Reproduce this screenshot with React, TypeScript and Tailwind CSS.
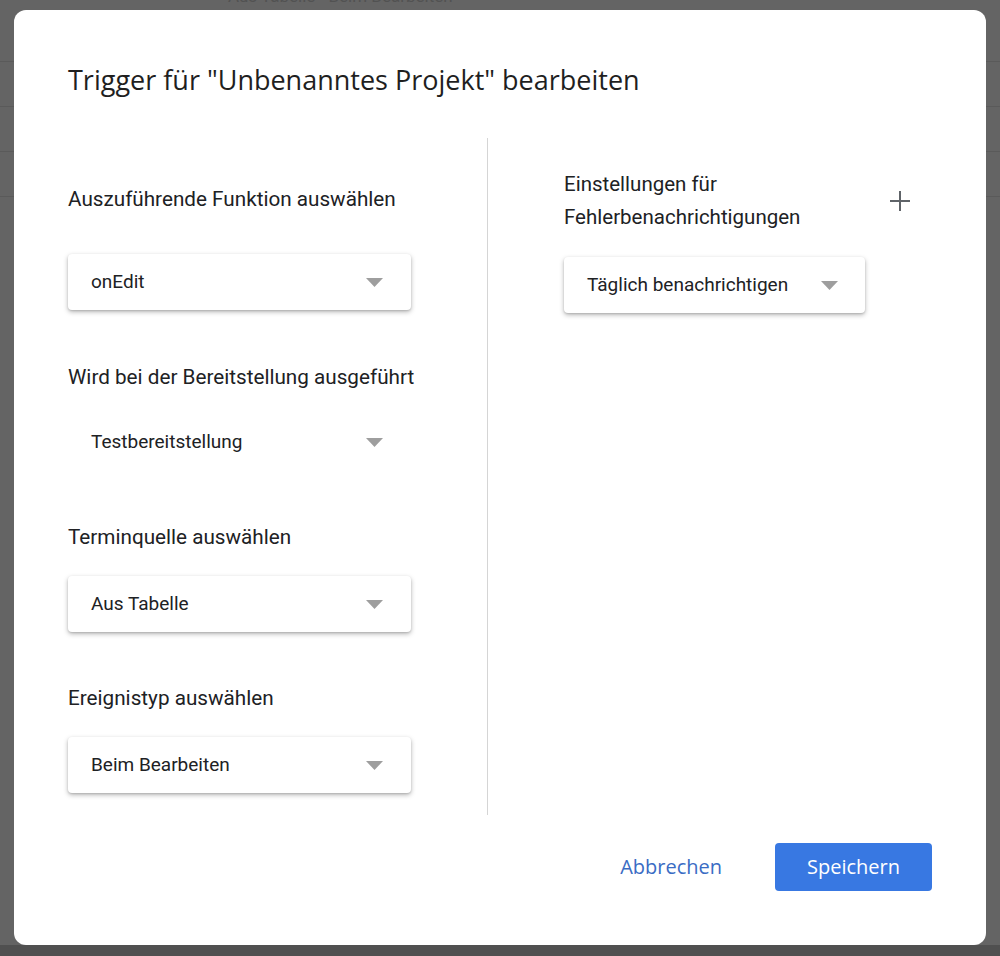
import React from "react";

const Arrow = () => (
  <svg width="17" height="9" viewBox="0 0 17 9" className="shrink-0">
    <path d="M0 0 L17 0 L8.5 9 Z" fill="#9e9e9e" />
  </svg>
);

const SelectBox = ({ text, width = "w-[343px]", plain = false, arrowRight = "pr-[28px]" }: { text: string; width?: string; plain?: boolean; arrowRight?: string }) => (
  <div
    className={`${width} h-[56px] rounded-[4px] bg-white flex items-center justify-between pl-[23px] ${arrowRight} ${plain ? "" : "shadow-[0_2px_5px_rgba(0,0,0,0.28),0_1px_2px_rgba(0,0,0,0.12)]"}`}
  >
    <span className="text-[19px] leading-[28px] text-[#202124]">{text}</span>
    <Arrow />
  </div>
);

const Label = ({ children, className = "" }: { children: React.ReactNode; className?: string }) => (
  <div className={`text-[20.7px] leading-[28px] text-[#202124] ${className}`}>{children}</div>
);

export default function App() {
  return (
    <div className="relative w-[1000px] h-[956px] overflow-hidden bg-[#646464]" style={{ fontFamily: "Roboto, 'Liberation Sans', sans-serif" }}>
      {/* background page */}
      <div className="flex flex-col">
        <div className="h-[62px] border-b border-[#5a5a5a] relative">
          <div className="absolute left-[228px] top-[-14px] text-[17px] leading-[20px] text-[#525252]">Aus Tabelle - Beim Bearbeiten</div>
        </div>
        <div className="h-[45px] border-b border-[#5a5a5a]" />
        <div className="h-[45px] border-b border-[#5a5a5a]" />
        <div className="h-[45px] border-b border-[#5a5a5a]" />
      </div>
      <div className="absolute left-0 right-0 bottom-0 h-[11px] bg-[#505050]" />

      {/* dialog */}
      <div className="absolute left-[14px] top-[10px] w-[972px] h-[935px] rounded-[12px] bg-white px-[54px] flex flex-col">
        <h1
          className="pt-[54px] text-[27px] leading-[32px] text-[#1f1f1f] font-medium"
          style={{ fontFamily: "'Open Sans', sans-serif" }}
        >
          Trigger für "Unbenanntes Projekt" bearbeiten
        </h1>

        <div className="flex mt-[42px]">
          <div className="w-[419px] flex flex-col">
            <Label className="mt-[47px]">Auszuführende Funktion auswählen</Label>
            <div className="mt-[41px]">
              <SelectBox text="onEdit" />
            </div>
            <Label className="mt-[53px]">Wird bei der Bereitstellung ausgeführt</Label>
            <div className="mt-[23px]">
              <SelectBox text="Testbereitstellung" plain />
            </div>
            <Label className="mt-[53px]">Terminquelle auswählen</Label>
            <div className="mt-[25px]">
              <SelectBox text="Aus Tabelle" />
            </div>
            <Label className="mt-[52px]">Ereignistyp auswählen</Label>
            <div className="mt-[25px]">
              <SelectBox text="Beim Bearbeiten" />
            </div>
          </div>

          <div className="w-px h-[677px] bg-[#d5d5d5]" />

          <div className="flex-1 pl-[76px] flex flex-col">
            <div className="mt-[30px] w-[347px] flex items-center justify-between">
              <div className="text-[20.5px] leading-[33px] text-[#202124]">
                Einstellungen für
                <br />
                Fehlerbenachrichtigungen
              </div>
              <svg width="22" height="22" viewBox="0 0 22 22">
                <path d="M11 1 V21 M1 11 H21" stroke="#5f6368" strokeWidth="2" />
              </svg>
            </div>
            <div className="mt-[23px]">
              <SelectBox text="Täglich benachrichtigen" width="w-[301px]" arrowRight="pr-[27px]" />
            </div>
          </div>
        </div>

        <div className="mt-auto pb-[54px] flex justify-end items-center">
          <button
            className="h-[48px] px-[24px] mr-[29px] text-[20px] font-medium text-[#3a6cc4]"
            style={{ fontFamily: "'Open Sans', sans-serif" }}
          >
            Abbrechen
          </button>
          <button
            className="h-[48px] w-[157px] rounded-[4px] bg-[#3878e2] text-white text-[20px] font-medium"
            style={{ fontFamily: "'Open Sans', sans-serif" }}
          >
            Speichern
          </button>
        </div>
      </div>
    </div>
  );
}
